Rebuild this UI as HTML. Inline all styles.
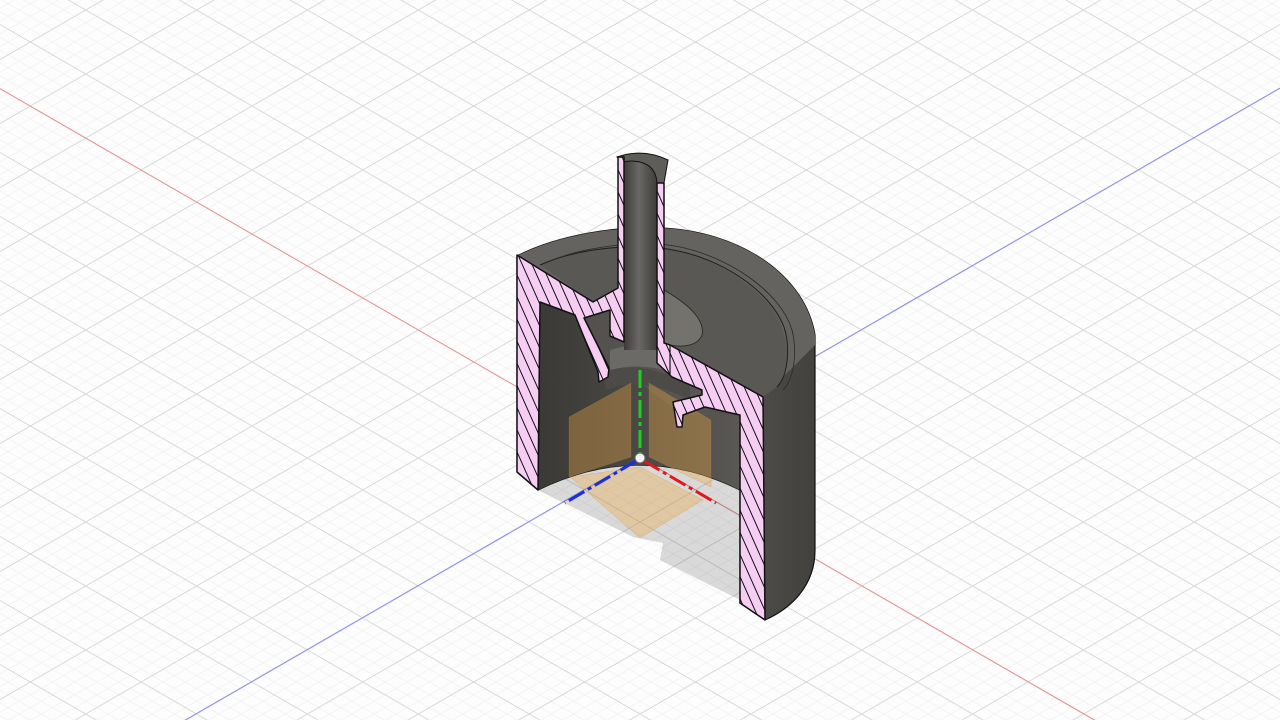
<!DOCTYPE html>
<html><head><meta charset="utf-8"><style>
html,body{margin:0;padding:0;background:#fff;width:1280px;height:720px;overflow:hidden}
svg{display:block;position:absolute;left:0;top:0}
</style></head><body>
<svg width="1280" height="720" viewBox="0 0 1280 720" xmlns="http://www.w3.org/2000/svg">
<defs>
<pattern id="minor" patternUnits="userSpaceOnUse" x="640" y="458" width="22.17" height="12.8">
<path d="M0,0 L22.17,12.8 M0,12.8 L22.17,0 M-22.17,0 L0,12.8 M22.17,12.8 L44.34,0" stroke="#eeeeee" stroke-width="0.6" fill="none"/>
</pattern>
<pattern id="major" patternUnits="userSpaceOnUse" x="640" y="458" width="110.85" height="64">
<path d="M0,0 L110.85,64 M0,64 L110.85,0" stroke="#d6d6d6" stroke-width="0.9" fill="none"/>
</pattern>
<pattern id="hatch" patternUnits="userSpaceOnUse" width="9" height="9" patternTransform="rotate(-24)">
<rect width="9" height="9" fill="#f6cdf3"/>
<line x1="0.5" y1="0" x2="0.5" y2="9" stroke="#111" stroke-width="1"/>
</pattern>
<linearGradient id="tube" x1="0" x2="1" y1="0" y2="0">
<stop offset="0" stop-color="#3c3b38"/><stop offset="0.45" stop-color="#6a6864"/><stop offset="1" stop-color="#3e3d3a"/>
</linearGradient>
<linearGradient id="body" x1="0" x2="1" y1="0" y2="0">
<stop offset="0" stop-color="#4f4d49"/><stop offset="0.6" stop-color="#595753"/><stop offset="1" stop-color="#42413d"/>
</linearGradient>
<linearGradient id="cav" x1="0" x2="1" y1="0" y2="0">
<stop offset="0" stop-color="#3a3936"/><stop offset="1" stop-color="#5a5854"/>
</linearGradient>
</defs>
<rect width="1280" height="720" fill="#fdfdfd"/>
<rect width="1280" height="720" fill="url(#minor)"/>
<rect width="1280" height="720" fill="url(#major)"/>
<line x1="0" y1="88.7" x2="1280" y2="827" stroke="#e79090" stroke-width="1"/>
<line x1="1280" y1="88" x2="0" y2="827" stroke="#8c8cf0" stroke-width="1"/>

<path d="M538,490 Q640,440 740,490 L740,600 L660,560 L663,543 L633,537 Z" fill="rgba(0,0,0,0.14)"/>

<path d="M517,256 C560,234 620,226 660,228 C740,231 805,275 815,335 L815,550 C815,585 792,608 765,620 L740,603 L740,490 Q640,440 538,490 L517,472 Z" fill="url(#body)" stroke="#111" stroke-width="1.2"/>
<path d="M517,256 C560,234 620,226 660,228 C740,231 805,275 815,335 L815,345 L763,397 L670,345 L664,343 L664,183 L624,183 L618,288 L593,302 Z" fill="#65635f"/>
<path d="M540,265 C565,252 590,247 615,247 C640,246 660,247 673,250 C705,256 735,272 760,295 C775,310 784,325 786,345 C788,360 787,373 777,387 L763,397 L670,345 L664,343 L664,200 L624,200 L618,288 L593,302 Z" fill="#5a5854"/>
<path d="M540,265 C580,247 640,243 673,250 C720,258 770,290 784,327 C790,345 789,375 777,387" fill="none" stroke="#1e1e1c" stroke-width="1"/>
<path d="M548,262 C585,246 640,240 675,246 C725,255 780,290 792,330 C797,350 795,378 783,390" fill="none" stroke="#2a2a28" stroke-width="0.8"/>
<path d="M664,290 C690,305 705,320 702,335 C698,345 685,348 670,345 L664,343 Z" fill="#74726d"/>
<path d="M664,290 C690,305 705,320 702,335 C698,345 685,348 670,345" fill="none" stroke="#222" stroke-width="0.8"/>

<path d="M538,302 L575,315 L598,372 L599,382 L608,377 L620,385 L640,383 L683,415 L740,415 L740,490 Q640,440 538,490 Z" fill="url(#cav)"/>
<path d="M604,372 Q640,358 690,385 L690,400 Q640,375 606,390 Z" fill="#4c4b47"/>
<path d="M610,350 Q640,340 672,352 L672,372 Q640,362 610,370 Z" fill="#6c6a66"/>

<rect x="624" y="160" width="33" height="190" fill="url(#tube)"/>
<path d="M617,157 Q643,148 668,160 L664,183 L657,183 Q656,166 640,162 Q630,160 624,162 Z" fill="#5f5d59" stroke="#111" stroke-width="1"/>

<g fill="rgba(235,170,70,0.36)" stroke="rgba(200,130,40,0.4)" stroke-width="0.5">
<path d="M569,417 L631,383 L631,457 L569,477 Z"/>
<path d="M649,383 L711,420 L711,487 L649,457 Z"/>
<path d="M570,477 L640,467 L703,500 L640,538 Z"/>
</g>
<path d="M517,255 L593,302 L618,288 L618,157 L624,157 L624,342 L610,336 L610,310 L584,318 L609,368 L608,377 L599,382 L598,372 L575,315 L540,302 L538,490 L517,472 Z" fill="url(#hatch)" stroke="#111" stroke-width="1.5" stroke-linejoin="round"/>
<path d="M657,183 L664,183 L664,343 L670,345 L763,397 L765,620 L740,603 L740,415 L705,407 L683,415 L682,427 L677,427 L673,402 L702,395 L702,390 L672,377 L657,363 Z" fill="url(#hatch)" stroke="#111" stroke-width="1.5" stroke-linejoin="round"/>
<line x1="670" y1="345" x2="670" y2="375" stroke="#111" stroke-width="1.2"/>
<line x1="640" y1="370" x2="640" y2="455" stroke="#1fcf1f" stroke-width="3" stroke-dasharray="18,4,4,4"/>
<line x1="636" y1="461" x2="565" y2="503" stroke="#1a2ee0" stroke-width="3" stroke-dasharray="18,4,4,4"/>
<line x1="644" y1="461" x2="716" y2="503" stroke="#e01a1a" stroke-width="3" stroke-dasharray="18,4,4,4"/>
<circle cx="640" cy="458" r="5" fill="#f4f4f4" stroke="#666" stroke-width="1"/>
</svg>
</body></html>
